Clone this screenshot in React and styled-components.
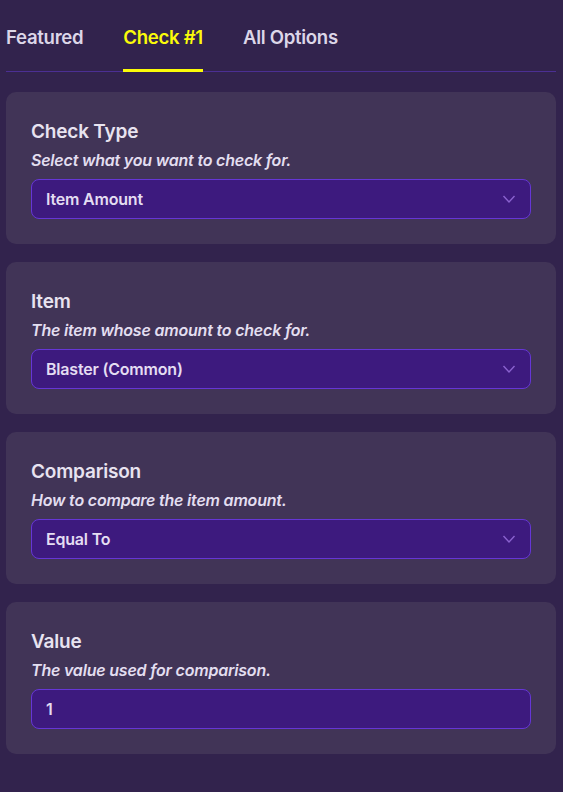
import React from "react";
import styled, { createGlobalStyle } from "styled-components";

const GlobalStyle = createGlobalStyle`
  html, body {
    margin: 0;
    padding: 0;
    background: #32234d;
  }
  body {
    font-family: 'Inter', 'Roboto', sans-serif;
  }
`;

const Page = styled.div`
  width: 563px;
  min-height: 792px;
  background: #32234d;
  padding: 0 7px 0 6px;
  box-sizing: border-box;
`;

// Barre d'onglets
const Tabs = styled.div`
  display: flex;
  gap: 40px;
  height: 72px;
  border-bottom: 1px solid #4b2f93;
  box-sizing: border-box;
`;

const Tab = styled.div`
  position: relative;
  display: flex;
  align-items: center;
  font-size: 18.6px;
  font-weight: 600;
  letter-spacing: -0.3px;
  color: ${(p) => (p.$active ? "#fbfb09" : "#dcd6e8")};
  padding-top: 3px;

  &::after {
    content: "";
    display: ${(p) => (p.$active ? "block" : "none")};
    position: absolute;
    left: 0;
    right: 0;
    bottom: -1px;
    height: 3px;
    background: #fbfb09;
  }
`;

const Cards = styled.div`
  display: flex;
  flex-direction: column;
  gap: 18px;
  padding-top: 20px;
`;

const Card = styled.div`
  background: #413457;
  border-radius: 10px;
  padding: 28px 25px 25px;
  height: 152px;
  box-sizing: border-box;
`;

const Title = styled.div`
  font-size: 19px;
  font-weight: 600;
  color: #e8e3f0;
  line-height: 24px;
  letter-spacing: -0.2px;
`;

const Subtitle = styled.div`
  font-size: 16px;
  font-style: italic;
  font-weight: 600;
  color: #e3def0;
  line-height: 20px;
  margin: 6px 0 9px;
  letter-spacing: -0.2px;
`;

const Field = styled.div`
  height: 40px;
  box-sizing: border-box;
  border: 1px solid #6636d6;
  border-radius: 8px;
  background: #3d1a7e;
  display: flex;
  align-items: center;
  justify-content: space-between;
  padding: 0 14px 0 14px;
  font-size: 16px;
  font-weight: 600;
  color: #e4ddf2;
  letter-spacing: -0.2px;
`;

const Chevron = () => (
  <svg width="14" height="10" viewBox="0 0 14 10" fill="none">
    <path d="M1.5 2 L7 8 L12.5 2" stroke="#8a62cf" strokeWidth="1.4" />
  </svg>
);

const items = [
  { title: "Check Type", sub: "Select what you want to check for.", value: "Item Amount", select: true },
  { title: "Item", sub: "The item whose amount to check for.", value: "Blaster (Common)", select: true },
  { title: "Comparison", sub: "How to compare the item amount.", value: "Equal To", select: true },
  { title: "Value", sub: "The value used for comparison.", value: "1", select: false },
];

export default function App() {
  return (
    <Page>
      <GlobalStyle />
      <Tabs>
        <Tab>Featured</Tab>
        <Tab $active>Check #1</Tab>
        <Tab>All Options</Tab>
      </Tabs>
      <Cards>
        {items.map((it) => (
          <Card key={it.title}>
            <Title>{it.title}</Title>
            <Subtitle>{it.sub}</Subtitle>
            <Field>
              <span>{it.value}</span>
              {it.select && <Chevron />}
            </Field>
          </Card>
        ))}
      </Cards>
    </Page>
  );
}
